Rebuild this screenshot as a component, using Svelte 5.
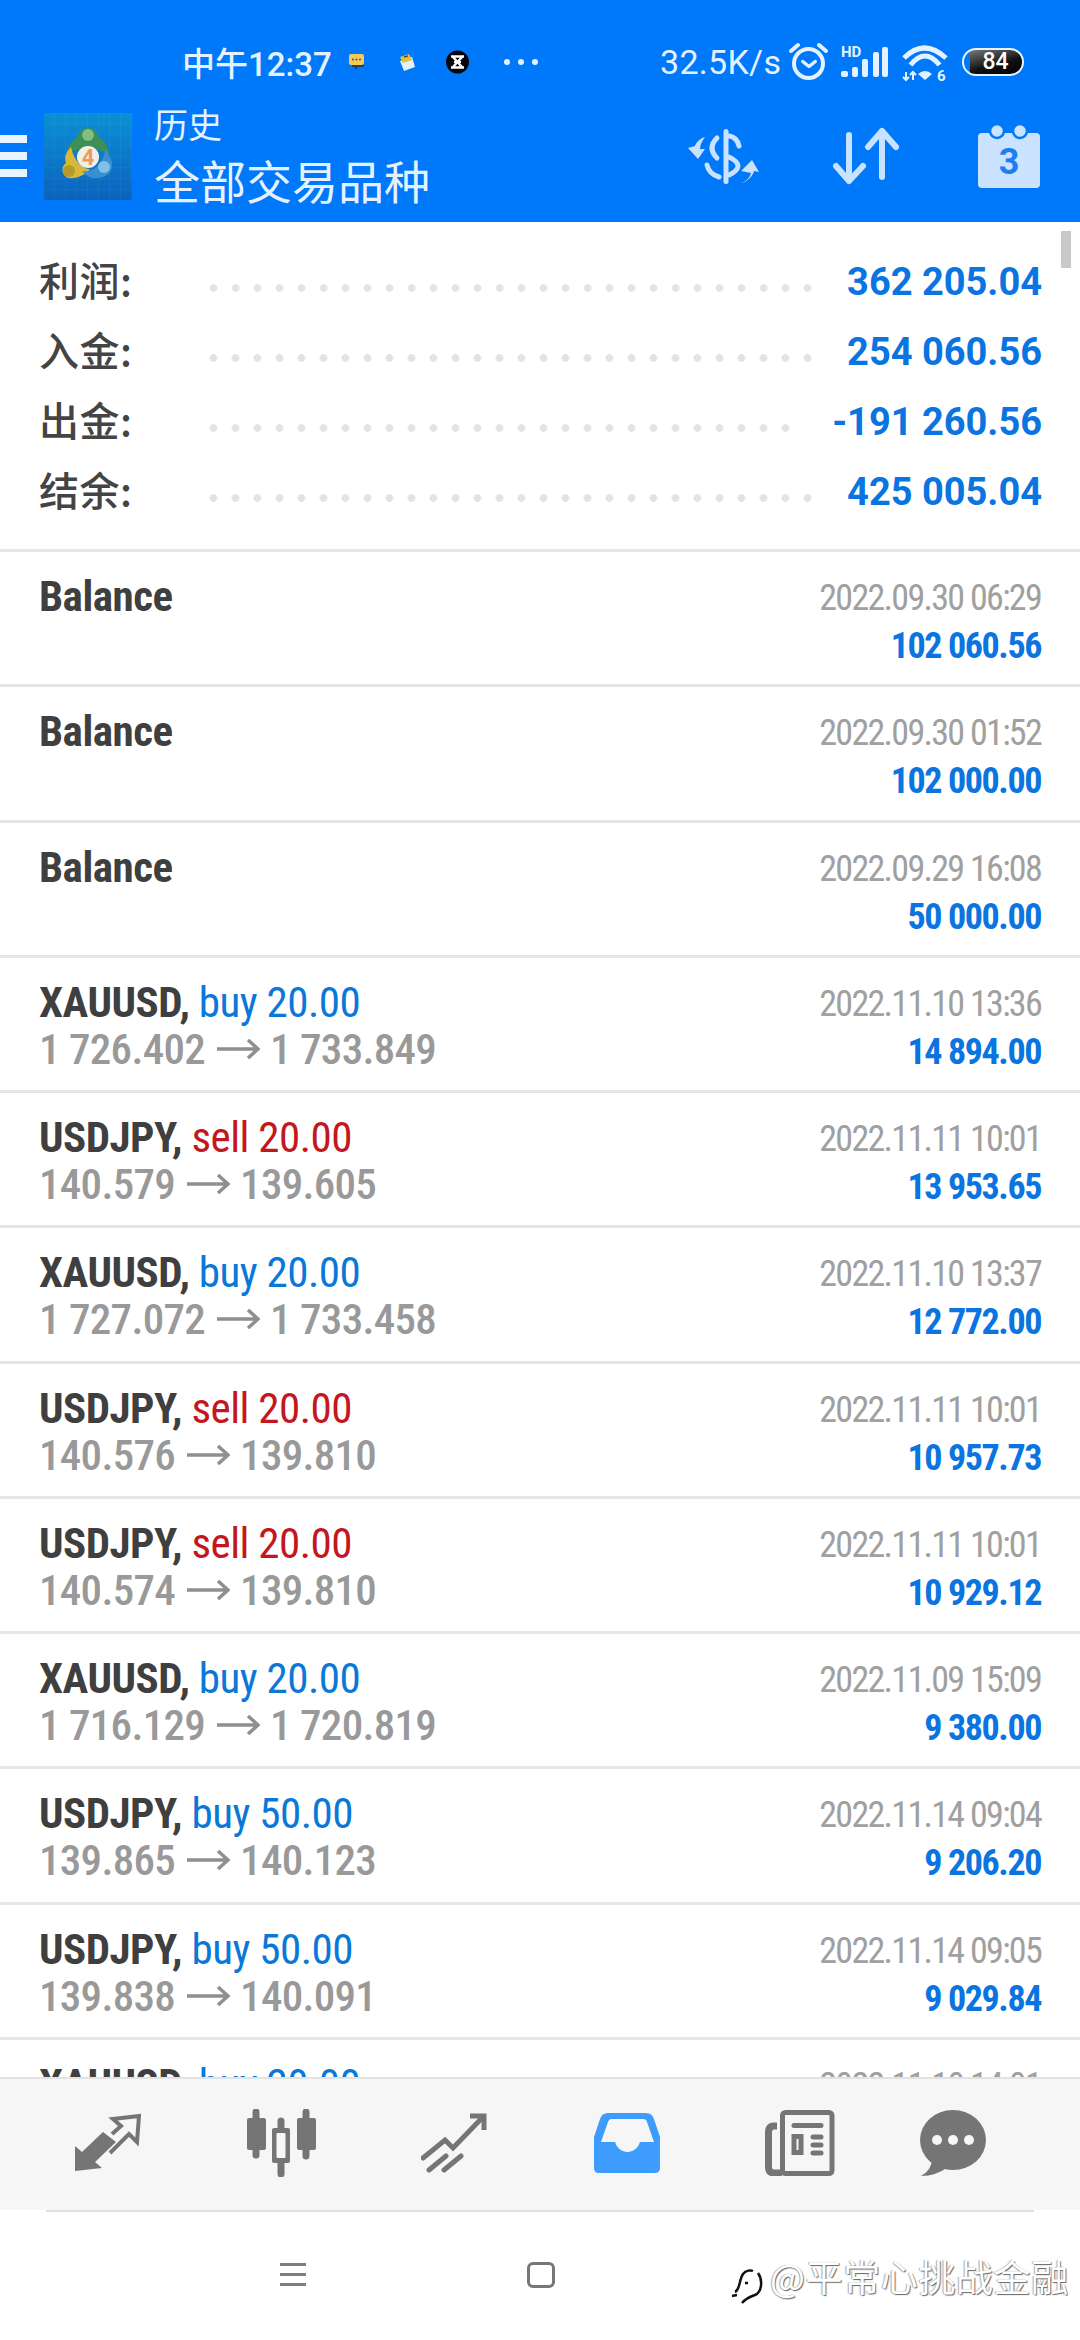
<script>
  const summary = [
    { label: '利润:', value: '362 205.04' },
    { label: '入金:', value: '254 060.56' },
    { label: '出金:', value: '-191 260.56' },
    { label: '结余:', value: '425 005.04' }
  ];

  const balances = [
    { date: '2022.09.30 06:29', profit: '102 060.56' },
    { date: '2022.09.30 01:52', profit: '102 000.00' },
    { date: '2022.09.29 16:08', profit: '50 000.00' }
  ];

  const trades = [
    { sym: 'XAUUSD', side: 'buy', lots: '20.00', open: '1 726.402', close: '1 733.849', date: '2022.11.10 13:36', profit: '14 894.00' },
    { sym: 'USDJPY', side: 'sell', lots: '20.00', open: '140.579', close: '139.605', date: '2022.11.11 10:01', profit: '13 953.65' },
    { sym: 'XAUUSD', side: 'buy', lots: '20.00', open: '1 727.072', close: '1 733.458', date: '2022.11.10 13:37', profit: '12 772.00' },
    { sym: 'USDJPY', side: 'sell', lots: '20.00', open: '140.576', close: '139.810', date: '2022.11.11 10:01', profit: '10 957.73' },
    { sym: 'USDJPY', side: 'sell', lots: '20.00', open: '140.574', close: '139.810', date: '2022.11.11 10:01', profit: '10 929.12' },
    { sym: 'XAUUSD', side: 'buy', lots: '20.00', open: '1 716.129', close: '1 720.819', date: '2022.11.09 15:09', profit: '9 380.00' },
    { sym: 'USDJPY', side: 'buy', lots: '50.00', open: '139.865', close: '140.123', date: '2022.11.14 09:04', profit: '9 206.20' },
    { sym: 'USDJPY', side: 'buy', lots: '50.00', open: '139.838', close: '140.091', date: '2022.11.14 09:05', profit: '9 029.84' },
    // only the top of this row shows above the tab bar
    { sym: 'XAUUSD', side: 'buy', lots: '20.00', date: '2022.11.10 14:01' }
  ];
</script>

<div class="phone">
  <header class="top">
    <div class="status">
      <span class="clock">中午12:37</span>
      <svg class="n1" width="17" height="16" viewBox="0 0 17 16">
        <path d="M3 5h12v8H9l-3 3v-3H3z" fill="#27405c" />
        <rect x="0" y="0" width="15" height="11" rx="2" fill="#f4c95a" />
        <circle cx="4" cy="5.5" r="1" fill="#553" /><circle cx="7.5" cy="5.5" r="1" fill="#553" /><circle cx="11" cy="5.5" r="1" fill="#553" />
      </svg>
      <svg class="n2" width="16" height="17" viewBox="0 0 16 17">
        <path d="M1 7 13 3 16 13 5 17z" fill="#e6f0fb" />
        <path d="M1 3 10 0 13 6 4 9z" fill="#e6bf3c" />
        <path d="M5 3 9 2" stroke="#453" stroke-width="1.5" />
      </svg>
      <svg class="n3" width="23" height="24" viewBox="0 0 23 24">
        <circle cx="11.5" cy="12" r="11.5" fill="#05070c" />
        <path d="M5 6.5h13M5 17.5h13M7 7l9 10M16 7 7 17" stroke="#fff" stroke-width="2.4" />
        <path d="M8 11h7v2H8z" fill="#fff" />
      </svg>
      <span class="st-more"><i></i><i></i><i></i></span>
      <span class="speed">32.5K/s</span>
      <svg class="alarm" width="40" height="38" viewBox="0 0 40 38" fill="none" stroke="#e4f2ff" stroke-width="4" stroke-linecap="round" stroke-linejoin="round">
        <circle cx="19.5" cy="21.5" r="14.5" />
        <path d="M13.7 19.5 20 24.5 26.3 19.5" stroke-width="3.4" />
        <path d="M2 9 9 3M37 9 30 3" />
      </svg>
      <svg class="signal" width="48" height="32" viewBox="0 0 48 32" fill="#e4f2ff">
        <text x="0" y="12" class="hd">HD</text>
        <rect x="0" y="26" width="7" height="6" rx="2" />
        <rect x="11" y="22" width="6" height="10" rx="2" />
        <rect x="21" y="14" width="6" height="18" rx="2" />
        <rect x="32" y="7" width="6" height="25" rx="2" />
        <rect x="41" y="2" width="6" height="30" rx="2" />
      </svg>
      <svg class="wifi" width="48" height="36" viewBox="0 0 48 36" fill="none" stroke="#e4f2ff">
        <path d="M3 12Q23 -8 45 12" stroke-width="5" />
        <path d="M9.5 19Q24 1 38.500 19" stroke-width="5" />
        <path d="M17 28Q24 22 31 28L24 34Z" fill="#e4f2ff" stroke="none" />
        <path d="M5 26V34M2 31 5 34 8 31M12 34V26M9 29 12 26 15 29" stroke-width="2" />
        <text x="36" y="35" class="six">6</text>
      </svg>
      <span class="batt">84</span>
    </div>
    <div class="bar">
      <div class="burger"><i></i><i></i><i></i></div>
      <svg class="logo" width="88" height="87" viewBox="0 0 88 87">
        <defs>
          <linearGradient id="lg" x1="0" y1="0" x2="0" y2="1">
            <stop offset="0" stop-color="#0a90d4" /><stop offset="1" stop-color="#0c62bd" />
          </linearGradient>
          <pattern id="gr" width="11" height="11" patternUnits="userSpaceOnUse">
            <path d="M11 0V11H0" fill="none" stroke="#fff" stroke-opacity=".08" />
          </pattern>
        </defs>
        <rect width="88" height="87" fill="url(#lg)" />
        <rect width="88" height="87" fill="url(#gr)" />
        <path d="M44 15C50 15 54 19 54 24C60 27 64 33 65 40L44 34 23 40C24 33 28 27 34 24C34 19 38 15 44 15Z" fill="#3f8f55" />
        <circle cx="44" cy="22" r="6" fill="#7fbf80" />
        <path d="M27 34C22 39 20 44 22 50C17 53 17 62 24 65C32 66 42 62 46 56C38 56 30 48 27 34Z" fill="#d7b93a" />
        <circle cx="25" cy="58" r="6" fill="#b59a2c" />
        <path d="M61 36C66 42 69 48 68 54C68 60 60 66 50 65C44 64 40 61 38 58C50 60 60 50 61 36Z" fill="#3a8fd0" />
        <circle cx="60" cy="54" r="6" fill="#7fc0e6" />
        <circle cx="44" cy="44" r="11" fill="#f3efe8" />
        <text x="44" y="52" class="four">4</text>
      </svg>
      <div class="titles">
        <div class="t1">历史</div>
        <div class="t2">全部交易品种</div>
      </div>
      <div class="actions">
        <svg width="72" height="55" viewBox="0 0 72 55" fill="none" stroke="#c9e2ff" stroke-width="5">
          <rect x="36.500" y="0" width="5" height="55" rx="2.500" fill="#c9e2ff" stroke="none" />
          <path d="M42 7Q50 8 52 17M30 9Q20 19 30 29M20 36Q22 45 32 48M42 28Q60 37 42 46" stroke-linecap="round" />
          <path d="M18 8C12 10 9 14 8 17L1 19 11 30 18 20 13 20C13 16 15 12 18 8Z" fill="#c9e2ff" stroke="none" />
          <path d="M54 54C60 52 63 48 64 44L54 42 65 31 72 43 67 42C66 47 60 53 54 54Z" fill="#c9e2ff" stroke="none" />
        </svg>
        <svg class="updown" width="66" height="58" viewBox="0 0 66 58" fill="none" stroke="#c9e2ff" stroke-width="6" stroke-linecap="round" stroke-linejoin="round">
          <path d="M16 8V54M3 39 16 54 30 39" />
          <path d="M49 50V4M35 20 49 4 63 20" />
        </svg>
        <svg class="cal" width="62" height="64" viewBox="0 0 62 64">
          <rect x="0" y="9" width="62" height="55" rx="4" fill="#cce3ff" />
          <circle cx="19" cy="7" r="7" fill="#cce3ff" stroke="#0078fa" stroke-width="2.500" />
          <circle cx="42" cy="7" r="7" fill="#cce3ff" stroke="#0078fa" stroke-width="2.500" />
          <text x="31" y="50" class="three">3</text>
        </svg>
      </div>
    </div>
  </header>

  <main class="list">
    <div class="scroll"></div>
    <section class="summary">
      {#each summary as s}
        <div class="sum-row">
          <span class="sum-label">{s.label}</span>
          <span class="dots"></span>
          <span class="sum-value">{s.value}</span>
        </div>
      {/each}
    </section>
    {#each balances as b}
      <div class="row">
        <div class="left"><div class="line1"><b>Balance</b></div></div>
        <div class="right">
          <div class="date">{b.date}</div>
          <div class="profit">{b.profit}</div>
        </div>
      </div>
    {/each}
    {#each trades as t}
      <div class="row">
        <div class="left">
          <div class="line1"><b>{t.sym},</b> <span class={t.side}>{t.side} {t.lots}</span></div>
          {#if t.open}
            <div class="line2">{t.open}<svg class="arrow" width="43" height="20" viewBox="0 0 43 20" fill="none" stroke="#8f8f8f" stroke-width="3.500"><path d="M0 10H41M31 1 41 10 31 19" /></svg>{t.close}</div>
          {/if}
        </div>
        <div class="right">
          <div class="date">{t.date}</div>
          {#if t.profit}<div class="profit">{t.profit}</div>{/if}
        </div>
      </div>
    {/each}
  </main>

  <nav class="tabs">
    <div class="tab">
      <svg width="66" height="60" viewBox="0 0 66 60" fill="#757575">
        <path d="M0 58V33L7 39 28 19 41 29 20 49 27 55Z" />
        <path d="M37 21 46 13 38 6 64 3 62 29 54 21 35 40" fill="none" stroke="#757575" stroke-width="4" />
      </svg>
    </div>
    <div class="tab">
      <svg width="70" height="68" viewBox="0 0 70 68" fill="#757575">
        <path d="M10 3V46M60 3V47M35 12V65" stroke="#757575" stroke-width="7" stroke-linecap="round" />
        <rect x="1" y="9" width="19" height="32" rx="2" />
        <rect x="51" y="9" width="19" height="32" rx="2" />
        <rect x="26" y="19" width="18" height="35" rx="2" />
        <rect x="30.500" y="24" width="9" height="25" rx="1" fill="#f6f6f6" />
      </svg>
    </div>
    <div class="tab">
      <svg width="66" height="60" viewBox="0 0 66 60" fill="none" stroke="#757575" stroke-width="5" stroke-linecap="round">
        <path d="M2 45 24 27 32 35 61 5" />
        <path d="M49 3H63V17" stroke-linecap="butt" />
        <path d="M8 57 25 43M23 57 40 43" />
      </svg>
    </div>
    <div class="tab">
      <svg width="66" height="60" viewBox="0 0 66 60">
        <path d="M14 0H52Q58 0 60 6L66 24V55Q66 60 61 60H5Q0 60 0 55V24L6 6Q8 0 14 0Z" fill="#3f9cff" />
        <path d="M17 6H49Q52 6 53 9L60 29H46A13 14 0 0 1 21 29H7L14 9Q15 6 17 6Z" fill="#f6f6f6" />
      </svg>
    </div>
    <div class="tab">
      <svg width="70" height="66" viewBox="0 0 70 66" fill="none" stroke="#757575" stroke-width="5" stroke-linecap="round">
        <rect x="17.500" y="2.500" width="49.500" height="61" rx="3" />
        <path d="M12 16H9Q3.500 16 3.500 22V57Q3.500 63 9 63H17" stroke-width="7" stroke-linecap="butt" />
        <path d="M29 15.500H56M48 27H56M48 35H56M48 43H56" />
        <rect x="29" y="26.500" width="7" height="16" stroke-linecap="butt" />
      </svg>
    </div>
    <div class="tab">
      <svg width="66" height="66" viewBox="0 0 66 66" fill="#757575">
        <ellipse cx="33" cy="30" rx="33" ry="30" />
        <path d="M12 48Q12 60 1 66Q16 66 28 57Z" />
        <circle cx="17" cy="30" r="5" fill="#f6f6f6" /><circle cx="33" cy="30" r="5" fill="#f6f6f6" /><circle cx="49" cy="30" r="5" fill="#f6f6f6" />
      </svg>
    </div>
  </nav>
  <div class="tab-rule"></div>

  <footer class="nav">
    <div class="menu"><i></i><i></i><i></i></div>
    <div class="home"></div>
    <div class="mark">
      <svg width="32" height="36" viewBox="0 0 32 36" fill="none" stroke="#111" stroke-width="2.500">
        <path d="M4 24C9 22 8 12 12 6C15 2 20 2 22 3M27 5C32 12 31 24 24 27C19 29 15 30 11 35M1 28 6 27M14 15 17 15" />
      </svg>
      <span class="mark-text">@平常心挑战金融</span>
    </div>
  </footer>
</div>

<style>
  :global(body) {
    margin: 0;
    background: #fff;
  }

  .phone {
    width: 1080px;
    height: 2340px;
    display: flex;
    flex-direction: column;
    overflow: hidden;
    font-family: Roboto, "Noto Sans CJK SC", sans-serif;
  }

  .top {
    height: 222px;
    flex: none;
    background: #0078fa;
    color: #e4f2ff;
  }

  .status {
    height: 68px;
    padding-top: 28px;
    display: flex;
    align-items: center;
  }

  .clock {
    margin-left: 182px;
    width: 150px;
    font-size: 33px;
    font-weight: 500;
    white-space: nowrap;
  }

  .n1 { margin-left: 17px; }
  .n2 { margin-left: 33px; }
  .n3 { margin-left: 31px; }

  .st-more {
    display: flex;
    gap: 8px;
    margin-left: 35px;
  }

  .st-more i {
    width: 6px;
    height: 6px;
    border-radius: 50%;
    background: #e4f2ff;
  }

  .speed {
    margin-left: 122px;
    width: 129px;
    font-size: 34px;
    letter-spacing: 0.3px;
    white-space: nowrap;
  }

  .alarm { margin-top: -3px; }
  .signal { margin-left: 12px; margin-top: -2px; overflow: visible; }
  .wifi { margin-left: 12px; margin-top: 3px; overflow: visible; }

  .hd {
    font: 700 15px Roboto, sans-serif;
  }

  .six {
    font: 700 15px Roboto, sans-serif;
    fill: #e4f2ff;
    stroke: none;
  }

  .batt {
    margin-left: 13px;
    width: 62px;
    height: 28px;
    box-sizing: border-box;
    border: 2px solid #e4f2ff;
    border-radius: 14px;
    background:
      linear-gradient(165deg, #777 0%, #111 55%, #000 100%) 6px 0 no-repeat;
    color: #fff;
    font-size: 23px;
    font-weight: 500;
    line-height: 24px;
    text-align: center;
    padding-left: 5px;
  }

  .bar {
    height: 126px;
    padding-bottom: 6px;
    box-sizing: border-box;
    display: flex;
    align-items: center;
  }

  .burger {
    width: 27px;
    display: flex;
    flex-direction: column;
    gap: 9px;
  }

  .burger i {
    height: 8px;
    background: #e8f3ff;
  }

  .logo {
    margin-left: 17px;
    flex: none;
  }

  .four {
    font: 700 22px Roboto, sans-serif;
    fill: #ee9a5a;
    text-anchor: middle;
  }

  .titles {
    margin-left: 22px;
    margin-top: -6px;
    font-family: "Noto Sans CJK SC", sans-serif;
  }

  .t1 {
    font-size: 34px;
    line-height: 52px;
  }

  .t2 {
    font-size: 46px;
    line-height: 58px;
  }

  .actions {
    margin-left: auto;
    margin-right: 40px;
    display: flex;
    align-items: center;
  }

  .updown { margin-left: 74px; }
  .cal { margin-left: 79px; }

  .three {
    font: 700 36px Roboto, sans-serif;
    fill: #1a7ff0;
    text-anchor: middle;
  }

  .list {
    position: relative;
    height: 1855px;
    flex: none;
    overflow: hidden;
  }

  .scroll {
    position: absolute;
    right: 9px;
    top: 9px;
    width: 10px;
    height: 37px;
    background: #c8c8c8;
  }

  .summary {
    height: 327px;
    padding-top: 24px;
    box-sizing: border-box;
  }

  .sum-row {
    height: 70px;
    display: flex;
    align-items: center;
    padding: 0 38px 0 39px;
  }

  .sum-label {
    width: 157px;
    flex: none;
    margin-top: -5px;
    font-family: "Noto Sans CJK SC", sans-serif;
    font-size: 40px;
    font-weight: 500;
    letter-spacing: 0.5px;
    color: #444;
  }

  .dots {
    flex: 1;
    height: 8px;
    margin: 14px 29px 0 0;
    background: radial-gradient(circle at 4px 4px, #e3e3e3 3.5px, transparent 4px) 13.5px 0 / 22px 8px repeat-x;
  }

  .sum-value {
    margin-top: 2px;
    font-size: 38px;
    font-weight: 700;
    color: #0a74e0;
    white-space: nowrap;
  }

  .row {
    height: 135.27px;
    box-sizing: border-box;
    border-top: 3px solid #e6e6e6;
    padding: 20px 39px 0;
    display: flex;
    justify-content: space-between;
    font-stretch: condensed;
  }

  .line1, .line2 {
    font-size: 43px;
    line-height: 48px;
    letter-spacing: -0.5px;
    white-space: nowrap;
  }

  .line1 { color: #3f3f3f; }
  .line1 b { font-weight: 700; }

  .line2 {
    margin-top: -1px;
    color: #999;
    font-weight: 500;
    letter-spacing: -0.7px;
  }

  .arrow {
    margin: 0 10px 0 12px;
    vertical-align: 5px;
  }

  .buy { color: #0a78d8; }
  .sell { color: #c4161c; }

  .right {
    padding-top: 2px;
    text-align: right;
  }

  .date {
    font-size: 36px;
    line-height: 48px;
    letter-spacing: -1.7px;
    color: #a0a0a0;
    white-space: nowrap;
  }

  .profit {
    font-size: 36px;
    line-height: 49px;
    font-weight: 700;
    letter-spacing: -1.4px;
    color: #0a74e0;
    white-space: nowrap;
  }

  .tabs {
    height: 133px;
    flex: none;
    box-sizing: border-box;
    border-top: 2px solid #e2e2e2;
    background: #f6f6f6;
    padding: 29px 0 0 21.5px;
    display: flex;
  }

  .tab {
    width: 173px;
    height: 70px;
    display: flex;
    justify-content: center;
    align-items: center;
  }

  .tab:last-child { margin-left: -20px; }

  .tab-rule {
    height: 2px;
    margin: 0 46px;
    background: #e0e0e0;
    flex: none;
  }

  .nav {
    position: relative;
    flex: 1;
    display: flex;
    align-items: flex-start;
    padding-top: 50px;
  }

  .menu {
    margin-left: 280px;
    width: 26px;
    display: flex;
    flex-direction: column;
    gap: 7.500px;
    padding-top: 1px;
  }

  .menu i {
    height: 2.500px;
    background: #7d7d7d;
  }

  .home {
    margin-left: 221px;
    width: 28px;
    height: 26px;
    box-sizing: border-box;
    border: 3px solid #777;
    border-radius: 6px;
  }

  .mark {
    position: absolute;
    left: 731px;
    top: 42px;
    display: flex;
    align-items: flex-start;
    gap: 7px;
  }

  .mark svg { margin-top: 14px; }

  .mark-text {
    font-family: "Noto Sans CJK SC", sans-serif;
    font-size: 37px;
    line-height: 44px;
    letter-spacing: 0.6px;
    color: #fff;
    text-shadow: 1px 1px 1px #666, -1px 0 1px #aaa;
    white-space: nowrap;
  }
</style>
